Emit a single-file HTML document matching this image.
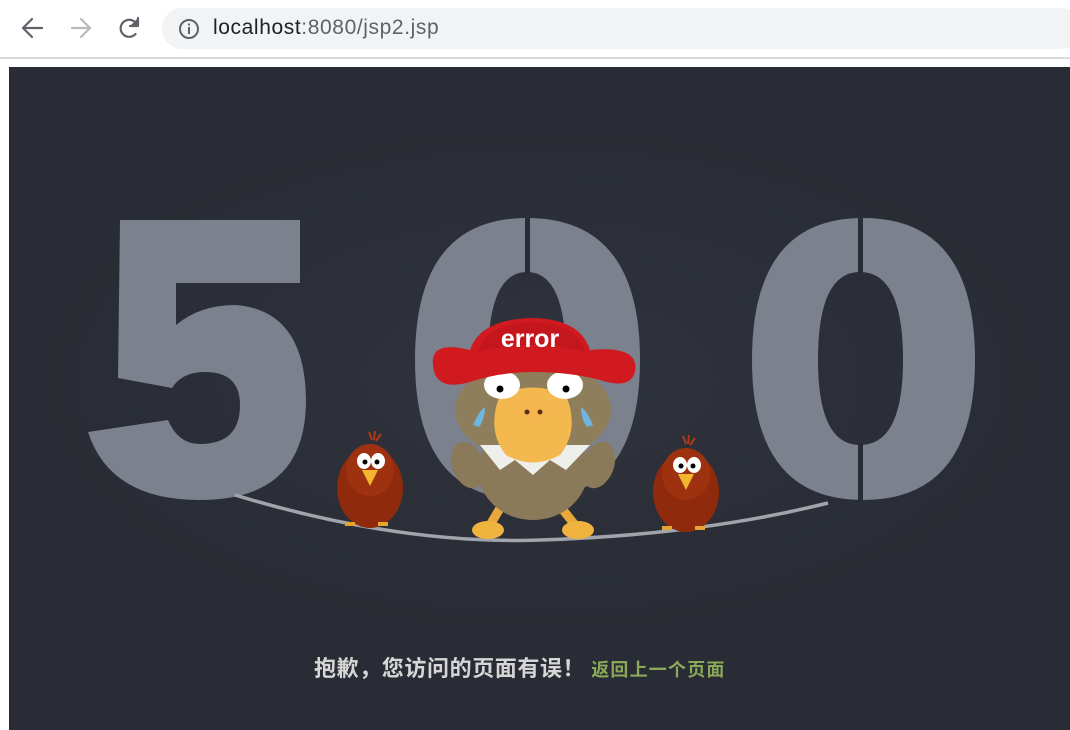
<!DOCTYPE html>
<html><head><meta charset="utf-8"><style>
html,body{margin:0;padding:0;width:1070px;height:730px;overflow:hidden;background:#fff;font-family:"Liberation Sans","Noto Sans CJK SC",sans-serif}
.bar{position:absolute;left:0;top:0;width:1070px;height:57px;background:#fff;border-bottom:2px solid #dadada}
.pill{position:absolute;left:162px;top:8px;width:920px;height:41px;border-radius:21px;background:#f1f3f4}
.url{position:absolute;left:213px;top:16px;font-size:21px;color:#202124;letter-spacing:0.6px}
.url span{color:#5f6368}
.stage{position:absolute;left:9px;top:67px;width:1061px;height:663px;background:#292c34}
.msg{position:absolute;left:314px;top:651px;font-size:22px;font-weight:bold;color:#d6d6d6;letter-spacing:0.6px;white-space:nowrap;font-family:"Liberation Sans","Noto Sans CJK SC",sans-serif}
.msg a{color:#8ba85a;font-size:18px;letter-spacing:1.2px;text-decoration:none;font-weight:bold;margin-left:6px}
</style></head><body>
<div class="bar">
<svg width="160" height="57" style="position:absolute;left:0;top:0">
<g fill="none" stroke-width="2.2" stroke-linecap="round" stroke-linejoin="round">
<path d="M42 28H24M32 19l-9 9 9 9" stroke="#5f6368"/>
<path d="M72 28H90M81 19l9 9-9 9" stroke="#b8babc"/>
<path d="M137 25a8.5 8.5 0 1 0 -1.5 9" stroke="#5f6368"/>
<path d="M138 18v8h-8" stroke="#5f6368" fill="#5f6368"/>
</g></svg>
<div class="pill"></div>
<svg width="24" height="24" style="position:absolute;left:177px;top:17px"><circle cx="12" cy="12" r="9" fill="none" stroke="#5f6368" stroke-width="2"/><rect x="11" y="10" width="2" height="7" fill="#5f6368"/><rect x="11" y="6.5" width="2" height="2" fill="#5f6368"/></svg>
<div class="url">localhost<span>:8080/jsp2.jsp</span></div>
</div>
<div class="stage">
<svg width="1061" height="663" viewBox="9 67 1061 663" style="position:absolute;left:0;top:0">
<defs><radialGradient id="g" cx="50%" cy="50%" r="50%"><stop offset="0" stop-color="#30333c"/><stop offset="1" stop-color="#292c34"/></radialGradient></defs>
<ellipse cx="540" cy="380" rx="520" ry="260" fill="url(#g)"/>
<g fill="#7c818e">
<path d="M120 220H300V283H176V325Q200 305 235 305Q305 310 306 400Q306 500 200 500Q110 500 88 432L168 420Q178 444 200 444Q240 444 240 405Q240 372 205 372Q182 372 172 388L118 378Z"/>
<path fill-rule="evenodd" d="M527 218Q640 218 640 360Q640 500 527 500Q415 500 415 360Q415 218 527 218ZM527 272Q488 272 488 360Q488 445 527 445Q566 445 566 360Q566 272 527 272Z"/>
<path fill-rule="evenodd" d="M863 218Q975 218 975 360Q975 500 863 500Q752 500 752 360Q752 218 863 218ZM860 272Q818 272 818 360Q818 445 860 445Q903 445 903 360Q903 272 860 272Z"/>
</g>
<rect x="525" y="218" width="5" height="56" fill="#292c34"/>
<rect x="858" y="218" width="5" height="56" fill="#292c34"/>
<rect x="858" y="443" width="5" height="58" fill="#292c34"/>
<path d="M235 495Q400 545 540 540Q700 535 828 503" fill="none" stroke="#a0a4ab" stroke-width="3.5"/>
<g>
<path d="M372 440l-3-8M374 440l1-9M376 441l5-7" stroke="#b03a14" stroke-width="2"/>
<ellipse cx="370" cy="488" rx="33" ry="40" fill="#8f2a0c"/>
<ellipse cx="370" cy="470" rx="24" ry="26" fill="#9e3210"/>
<ellipse cx="364" cy="461" rx="7" ry="8" fill="#fff"/><ellipse cx="378" cy="461" rx="7" ry="8" fill="#fff"/>
<circle cx="365" cy="462" r="2.5" fill="#000"/><circle cx="377" cy="462" r="2.5" fill="#000"/>
<path d="M362 470h16l-8 16z" fill="#f3b530"/>
<path d="M345 522h10v4h-10zM378 522h10v4h-10z" fill="#e6a332"/>
</g>
<g>
<path d="M686 444l-3-8M688 444l1-9M690 445l5-7" stroke="#b03a14" stroke-width="2"/>
<ellipse cx="686" cy="492" rx="33" ry="40" fill="#8f2a0c"/>
<ellipse cx="686" cy="474" rx="24" ry="26" fill="#9e3210"/>
<ellipse cx="680" cy="465" rx="7" ry="8" fill="#fff"/><ellipse cx="694" cy="465" rx="7" ry="8" fill="#fff"/>
<circle cx="681" cy="466" r="2.5" fill="#000"/><circle cx="693" cy="466" r="2.5" fill="#000"/>
<path d="M678 474h16l-8 16z" fill="#f3b530"/>
<path d="M662 526h10v4h-10zM695 526h10v4h-10z" fill="#e6a332"/>
</g>
<g>
<path d="M505 500l-15 25M555 500l20 25" stroke="#e8a93a" stroke-width="9"/>
<ellipse cx="488" cy="530" rx="16" ry="9" fill="#f0b43e"/>
<ellipse cx="578" cy="530" rx="16" ry="9" fill="#f0b43e"/>
<ellipse cx="533" cy="470" rx="55" ry="50" fill="#8b7a5a"/>
<ellipse cx="468" cy="465" rx="16" ry="24" fill="#8b7a5a" transform="rotate(-20 468 465)"/>
<ellipse cx="598" cy="465" rx="16" ry="24" fill="#8b7a5a" transform="rotate(20 598 465)"/>
<ellipse cx="533" cy="410" rx="78" ry="50" fill="#8f7e5c"/>
<path d="M480 445L500 470 515 460 533 475 550 460 566 470 590 445Z" fill="#eeeeea"/>
<path d="M500 395Q533 380 566 395Q580 430 560 455Q533 470 506 455Q486 430 500 395Z" fill="#f3b84e"/>
<ellipse cx="533" cy="408" rx="16" ry="11" fill="#f5b650"/>
<circle cx="527" cy="412" r="2.5" fill="#5a2f12"/><circle cx="540" cy="412" r="2.5" fill="#5a2f12"/>
<ellipse cx="502" cy="385" rx="18" ry="14" fill="#fff"/>
<ellipse cx="565" cy="385" rx="18" ry="14" fill="#fff"/>
<circle cx="500" cy="389" r="3.5" fill="#000"/><circle cx="566" cy="389" r="3.5" fill="#000"/>
<path d="M473 425q6-14 12-18q0 12-6 20z" fill="#6fb5e0"/>
<path d="M593 425q-6-14-12-18q0 12 6 20z" fill="#6fb5e0"/>
<path d="M433 365Q430 340 470 350Q480 320 530 318Q580 318 590 350Q640 345 635 372Q630 390 600 380Q570 372 533 372Q500 372 470 382Q435 392 433 365Z" fill="#d01a1f"/>
<path d="M478 352Q485 325 530 322Q578 322 585 352Q560 345 533 345Q505 345 478 352Z" fill="#c4161c"/>
<text x="530" y="347" text-anchor="middle" font-family="Liberation Sans,sans-serif" font-weight="bold" font-size="25" fill="#fff">error</text>
</g>
</svg>
</div>
<div class="msg">抱歉，您访问的页面有误！<a>返回上一个页面</a></div>
</body></html>
